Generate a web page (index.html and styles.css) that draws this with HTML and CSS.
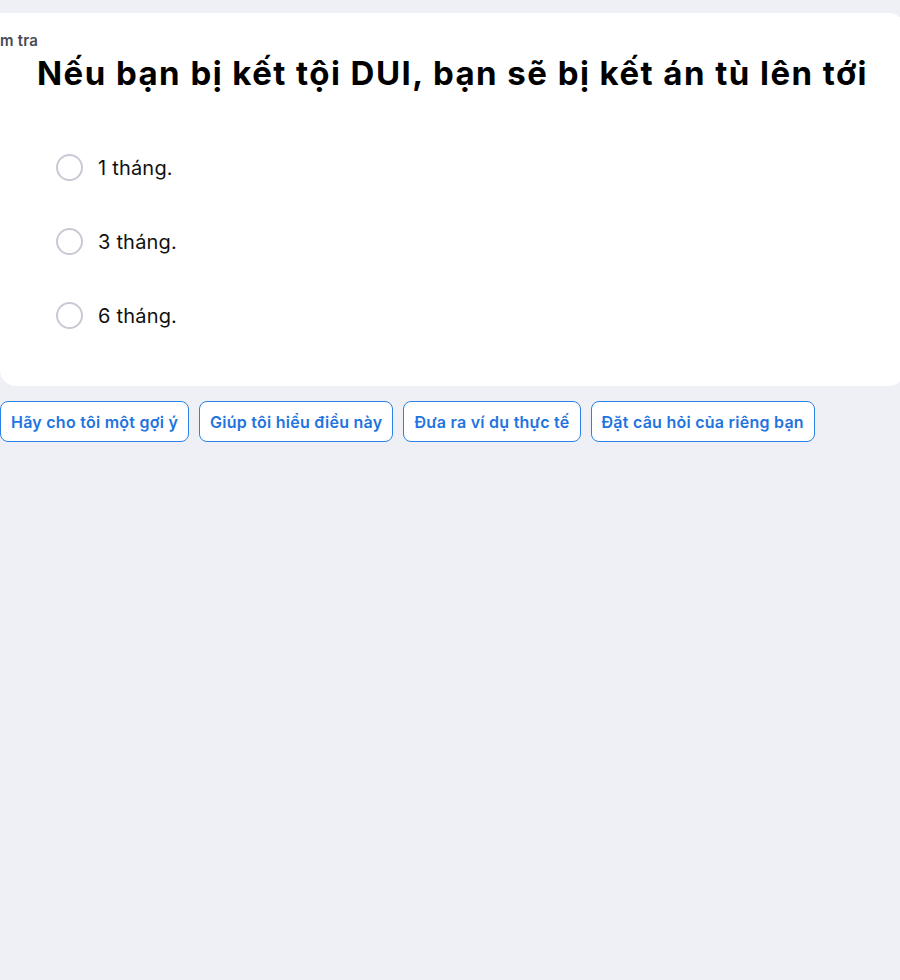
FILE: index.html
```html
<!DOCTYPE html>
<html lang="vi">
<head>
<meta charset="utf-8">
<title>Kiểm tra</title>
<link rel="stylesheet" href="styles.css">
</head>
<body>
<div class="page">
  <section class="card">
    <div class="label">Kiểm tra</div>
    <h1 class="title">Nếu bạn bị kết tội DUI, bạn sẽ bị kết án tù lên tới</h1>
    <ul class="options">
      <li class="option"><span class="radio"></span><span class="opt-text">1 tháng.</span></li>
      <li class="option"><span class="radio"></span><span class="opt-text">3 tháng.</span></li>
      <li class="option"><span class="radio"></span><span class="opt-text">6 tháng.</span></li>
    </ul>
  </section>
  <div class="actions">
    <button class="chip">Hãy cho tôi một gợi ý</button>
    <button class="chip">Giúp tôi hiểu điều này</button>
    <button class="chip">Đưa ra ví dụ thực tế</button>
    <button class="chip">Đặt câu hỏi của riêng bạn</button>
  </div>
</div>
</body>
</html>
```
FILE: styles.css
```css
html, body {
  margin: 0;
  padding: 0;
  background: #eff0f5;
  overflow: hidden;
  font-family: "Inter", "Noto Sans", sans-serif;
}
.page {
  width: 900px;
  height: 980px;
  overflow: hidden;
  padding-top: 13px;
  box-sizing: border-box;
}
.card {
  width: 905px;
  background: #ffffff;
  border-radius: 0 16px 16px 16px;
  padding: 20px 0 57px 0;
  box-sizing: border-box;
}
.label {
  font-size: 15px;
  font-weight: 600;
  color: #4a4a55;
  line-height: 16px;
  margin-left: -24px;
  letter-spacing: 0.2px;
}
.title {
  margin: 4px 0 0 0;
  text-align: center;
  font-size: 33px;
  font-weight: 700;
  color: #000000;
  line-height: 40px;
  letter-spacing: 1.45px;
  padding-right: 0;
}
.options {
  list-style: none;
  margin: 61px 0 0 0;
  padding: 0 0 0 56px;
  display: flex;
  flex-direction: column;
  gap: 47px;
}
.option {
  display: flex;
  align-items: center;
  gap: 15px;
  height: 27px;
}
.radio {
  width: 27px;
  height: 27px;
  border: 2px solid #c9c9d6;
  border-radius: 50%;
  box-sizing: border-box;
  flex: none;
}
.opt-text {
  font-size: 20px;
  color: #111111;
  letter-spacing: 0.2px;
}
.actions {
  display: flex;
  gap: 10px;
  margin-top: 15px;
}
.chip {
  height: 41px;
  padding: 0 10px;
  background: #ffffff;
  border: 1px solid #2a82e4;
  border-radius: 8px;
  font-family: inherit;
  font-size: 16px;
  font-weight: 600;
  color: #1f74e0;
  letter-spacing: 0.25px;
  cursor: pointer;
}
```
